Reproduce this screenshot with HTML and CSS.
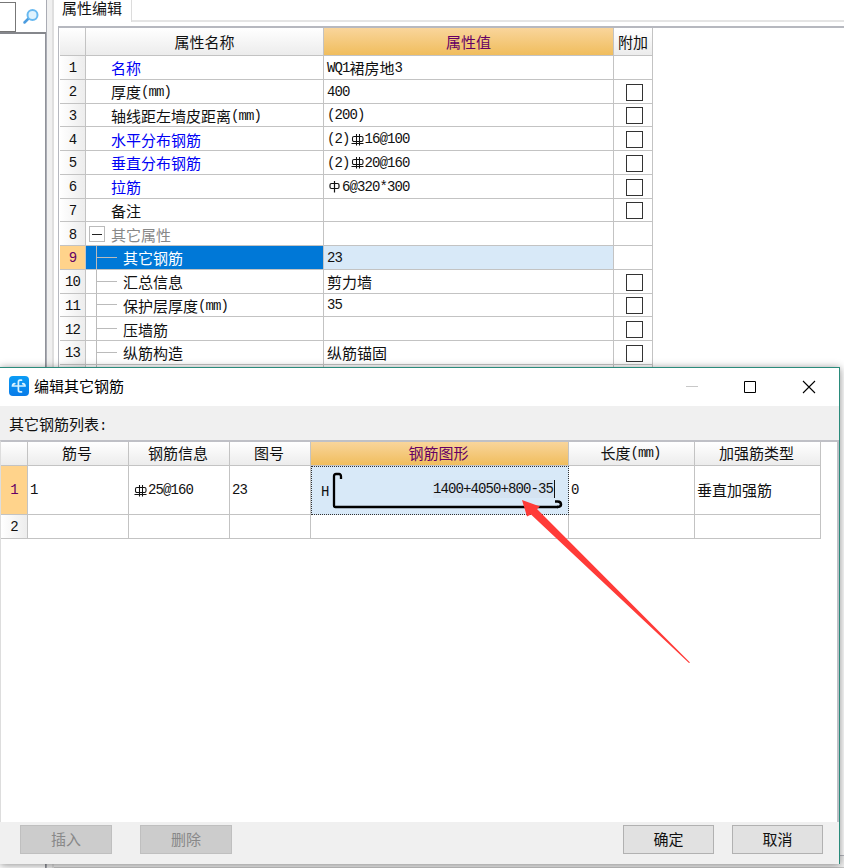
FILE: index.html
```
<!DOCTYPE html>
<html lang="zh-CN">
<head>
<meta charset="utf-8">
<title>属性编辑</title>
<link rel="stylesheet" href="styles.css">
</head>
<body>
<svg class="defs" width="0" height="0">
  <symbol id="rebar" viewBox="0 0 15 13"><path d="M4 3.500h7.500q1.500 0 1.500 1.500v2q0 1.500-1.500 1.500H4q-1.500 0-1.500-1.500V5q0-1.500 1.500-1.500zM1.500 10.500h12M6.500 1v11.500M9.500 1v11.500" fill="none" stroke="currentColor" stroke-width="1.050"/></symbol>
  <symbol id="plain" viewBox="0 0 15 13"><path d="M4.500 3.500h6q1.500 0 1.500 1.500v2q0 1.500-1.500 1.500h-6Q3 8.500 3 7V5q0-1.500 1.500-1.500zM7.500 1v11.500" fill="none" stroke="currentColor" stroke-width="1.200"/></symbol>
</svg>
<div class="workspace">
  <aside class="side">
    <div class="search"><div class="field"></div>
      <svg width="18" height="18" viewBox="0 0 18 18"><path d="M6.500 10.500 2.500 14.500" stroke="#4b9cdf" stroke-width="2.500" stroke-linecap="round"/><circle cx="10.500" cy="7" r="5" fill="#dff3fe" stroke="#68b9f0" stroke-width="2"/></svg>
    </div>
    <div class="list"></div>
  </aside>
  <div class="splitter"></div>
  <main class="panel">
    <div class="tabs"><div class="tab">属性编辑</div><div class="tab-rest"></div></div>
    <div class="props">
      <div class="row head"><div class="num"></div><div>属性名称</div><div class="hot">属性值</div><div>附加</div></div>
      <div class="row"><div class="num">1</div><div class="name key">名称</div><div class="val"><i>WQ1</i>裙房地<i>3</i></div><div></div></div>
      <div class="row"><div class="num">2</div><div class="name">厚度<i>(mm)</i></div><div class="val"><i>400</i></div><div class="chk"><b></b></div></div>
      <div class="row"><div class="num">3</div><div class="name">轴线距左墙皮距离<i>(mm)</i></div><div class="val"><i>(200)</i></div><div class="chk"><b></b></div></div>
      <div class="row"><div class="num">4</div><div class="name key">水平分布钢筋</div><div class="val"><i>(2)</i><svg class="sym"><use href="#rebar"/></svg><i>16@100</i></div><div class="chk"><b></b></div></div>
      <div class="row"><div class="num">5</div><div class="name key">垂直分布钢筋</div><div class="val"><i>(2)</i><svg class="sym"><use href="#rebar"/></svg><i>20@160</i></div><div class="chk"><b></b></div></div>
      <div class="row"><div class="num">6</div><div class="name key">拉筋</div><div class="val"><svg class="sym"><use href="#plain"/></svg><i>6@320*300</i></div><div class="chk"><b></b></div></div>
      <div class="row"><div class="num">7</div><div class="name">备注</div><div class="val"></div><div class="chk"><b></b></div></div>
      <div class="row"><div class="num">8</div><div class="name group"><span class="toggle"></span>其它属性</div><div class="val"></div><div></div></div>
      <div class="row selected"><div class="num">9</div><div class="name child"><span class="branch"></span>其它钢筋</div><div class="val"><i>23</i></div><div></div></div>
      <div class="row"><div class="num">10</div><div class="name child"><span class="branch"></span>汇总信息</div><div class="val">剪力墙</div><div class="chk"><b></b></div></div>
      <div class="row"><div class="num">11</div><div class="name child"><span class="branch"></span>保护层厚度<i>(mm)</i></div><div class="val"><i>35</i></div><div class="chk"><b></b></div></div>
      <div class="row"><div class="num">12</div><div class="name child"><span class="branch"></span>压墙筋</div><div class="val"></div><div class="chk"><b></b></div></div>
      <div class="row"><div class="num">13</div><div class="name child"><span class="branch"></span>纵筋构造</div><div class="val">纵筋锚固</div><div class="chk"><b></b></div></div>
      <div class="row"><div class="num"></div><div class="name child"><span class="branch"></span></div><div class="val"></div><div class="chk"><b></b></div></div>
    </div>
    <div class="panel-foot"></div>
  </main>
</div>

<section class="dialog">
  <header class="title">
    <svg width="20" height="20" viewBox="0 0 20 20"><defs><linearGradient id="logo" x2="0" y2="1"><stop stop-color="#0b9cf5"/><stop offset="1" stop-color="#087be8"/></linearGradient></defs><rect width="20" height="20" rx="4" fill="url(#logo)"/><path d="M12.500 4.200H11Q9.400 4.200 9.400 6V14Q9.400 15.900 11 15.900H12.500M5.800 7.700Q3.500 8 3.500 10H16Q16 8 13.700 7.700" fill="none" stroke="#d8f2ff" stroke-width="1.700" stroke-linecap="round"/></svg>
    <span>编辑其它钢筋</span>
    <svg class="controls" width="132" height="14" viewBox="0 0 132 14"><path d="M0 6.500h12" stroke="#c8c8c8"/><path d="M58.500 1.500h11v11h-11z" fill="none" stroke="#000"/><path d="m117 1 12 12m0-12-12 12" stroke="#000" stroke-width="1.100"/></svg>
  </header>
  <div class="caption">其它钢筋列表<i>:</i></div>
  <div class="bars">
    <div class="brow head"><div class="num"></div><div>筋号</div><div>钢筋信息</div><div>图号</div><div class="hot">钢筋图形</div><div>长度<i>(mm)</i></div><div>加强筋类型</div></div>
    <div class="brow tall"><div class="num active">1</div><div><i>1</i></div><div><svg class="sym"><use href="#rebar"/></svg><i>25@160</i></div><div><i>23</i></div>
      <div class="shape"><i class="h">H</i>
        <svg class="bend" width="234" height="38" viewBox="0 0 234 38"><path d="M9 8V5.500Q9 3 7 3H4Q2 3 2 5v29.500Q2 36 3.500 36H226" fill="none" stroke="#000" stroke-width="2.300"/><path d="M223 30.500h2.500q3.500 0 3.500 3 0 2.500-4 2.500" fill="none" stroke="#000" stroke-width="2.500"/></svg>
        <span class="edit"><i>1400+4050+800-35</i></span>
      </div><div><i>0</i></div><div>垂直加强筋</div></div>
    <div class="brow"><div class="num">2</div><div></div><div></div><div></div><div></div><div></div><div></div></div>
  </div>
  <footer class="actions"><button disabled>插入</button><button class="del" disabled>删除</button><button class="ok">确定</button><button class="cancel">取消</button></footer>
</section>
<svg class="arrow" width="172" height="168" viewBox="0 0 172 168"><path d="M0 0 18 6.500 15 9 168 162.500 167 163 9 14.500 5 16.500Z" fill="#ff3b38"/></svg>
</body>
</html>
```

FILE: styles.css
```
* { box-sizing: border-box; }
html, body { height: 100%; }
body { margin: 0; overflow: hidden; position: relative; background: #fff; color: #111; font: 15px/20px "Noto Sans CJK SC", sans-serif; }
i, .num { font: 14px/20px "Liberation Mono", monospace; letter-spacing: -.9px; white-space: pre; }
.defs { position: absolute; }
.sym { width: 15px; height: 13px; flex: none; }

.workspace { display: flex; height: 868px; }
.side { width: 47px; display: flex; flex-direction: column; border-right: 1px solid #aaacb4; }
.search { height: 34px; display: flex; align-items: flex-start; gap: 6px; padding-top: 2px; border-bottom: 2px solid #85878c; }
.search .field { width: 16px; height: 30px; border: 1px solid #777; border-width: 1px 1px 1px 0; }
.search svg { margin-top: 6px; }
.list { flex: 1; border-right: 1px solid #909299; }
.splitter { width: 7px; background: #f0f0f0; border-right: 2px solid #dfdfdf; }
.panel { flex: 1; min-width: 0; }
.tabs { height: 26px; display: flex; align-items: flex-start; }
.tab { width: 78px; height: 22px; padding-left: 8px; line-height: 16px; border-right: 1px solid #dcdcdc; }
.tab-rest { flex: 1; height: 22px; border-bottom: 2px solid #e4e4e4; }
.props { margin-left: 4px; border: solid #b6b8bf; border-width: 2px 0 1px 1px; padding-left: 1px; height: 830px; }
.panel-foot { height: 12px; background: #f0f0f0; border-bottom: 1px solid #c6c6c6; }
.row { display: grid; grid-template-columns: 26px 238px 290px 39px; width: 593px; height: 23.75px; }
.row > div { border: solid #c3c3c3; border-width: 0 1px 1px 0; display: flex; align-items: center; min-width: 0; white-space: nowrap; }
.row.head { height: 28px; }
.row > .num, .brow > .num { justify-content: center; background: linear-gradient(90deg, #fff, #ededed); }
.row > .num { padding: 2px 0 0 0; }
.row.head > div, .brow.head > div { justify-content: center; background: linear-gradient(#fff, #ececec); }
.row.head > .hot, .brow.head > .hot { background: linear-gradient(#f9d59b, #f0bd5d); color: #650065; }
.row > .name { padding: 2px 0 0 25px; position: relative; }
.row > .val { padding: 1px 0 0 3px; }
.row > .key { color: #0000f5; }
.row > .group { color: #888; }
.row > .child { padding-left: 37px; }
.row > .chk { justify-content: center; padding: 2px 0 0 2px; }
.chk b { width: 17px; height: 17px; border: 1px solid #333; background: #fff; }
.toggle { position: absolute; left: 3px; top: 4px; width: 16px; height: 16px; border: 1px solid #bbb; display: flex; align-items: center; justify-content: center; }
.toggle::after { content: ""; width: 10px; height: 1px; background: #222; }
.branch { position: absolute; left: 10px; top: 0; width: 21px; height: 100%; border-left: 1px solid #bbb; background: linear-gradient(#bbb, #bbb) 0 50%/100% 1px no-repeat; }
.selected > .num { background: #ffd38b; color: #650065; }
.selected > .name { background: #0078d7; color: #fff; }
.selected > .val { background: #d8e9f8; }

.dialog { position: absolute; left: 0; top: 367px; width: 840px; height: 497px; display: flex; flex-direction: column; background: #f0f0f0; border: solid #2a8b7b; border-width: 1px 1px 0 0; box-shadow: 0 1px 8px rgba(0,0,0,.45); }
.title { height: 38px; display: flex; align-items: center; padding: 0 21px 2px 9px; gap: 5px; background: #fff; color: #000; }
.controls { margin-left: auto; margin-top: 2px; }
.caption { height: 34px; padding: 8px 0 0 9px; }
.bars { height: 382px; background: #fff; border: solid #bfc0c6; border-width: 2px 2px 0 1px; border-left-color: #ddd; }
.brow { display: grid; grid-template-columns: 27px 101px 101px 81px 258px 126px 126px; width: 820px; height: 24px; }
.brow > div { border: solid #c3c3c3; border-width: 0 1px 1px 0; display: flex; align-items: center; padding-left: 2px; white-space: nowrap; }
.brow > div:nth-child(3) { padding-left: 4px; }
.brow > .num { padding: 0; }
.brow.head > div { padding: 0 2px 2px 0; }
.brow.tall { height: 49px; }
.brow > .active { background: #ffd38b; color: #650065; }
.brow > .shape { position: relative; background: #d8e9f8; border: 1px dotted #333; }
.shape .h { padding: 3px 0 0 7px; }
.bend { position: absolute; left: 20px; top: 4px; }
.edit { position: absolute; right: 13px; top: 13px; height: 18px; padding-right: 1px; background: #d5e3f1; border-right: 1px solid #111; display: flex; align-items: center; }
.actions { flex: 1; display: flex; align-items: flex-start; padding: 3px 16px 0 20px; }
button { width: 91px; height: 29px; padding: 0 0 2px; border: 1px solid #b1b1b1; background: #e1e1e1; color: #111; font: inherit; line-height: 20px; }
button:disabled { width: 92px; background: #ccc; border-color: #bfbfbf; color: #888; }
.del { margin-left: 28px; }
.ok { margin-left: auto; }
.cancel { margin-left: 18px; }
.arrow { position: absolute; left: 522px; top: 500px; }
```
